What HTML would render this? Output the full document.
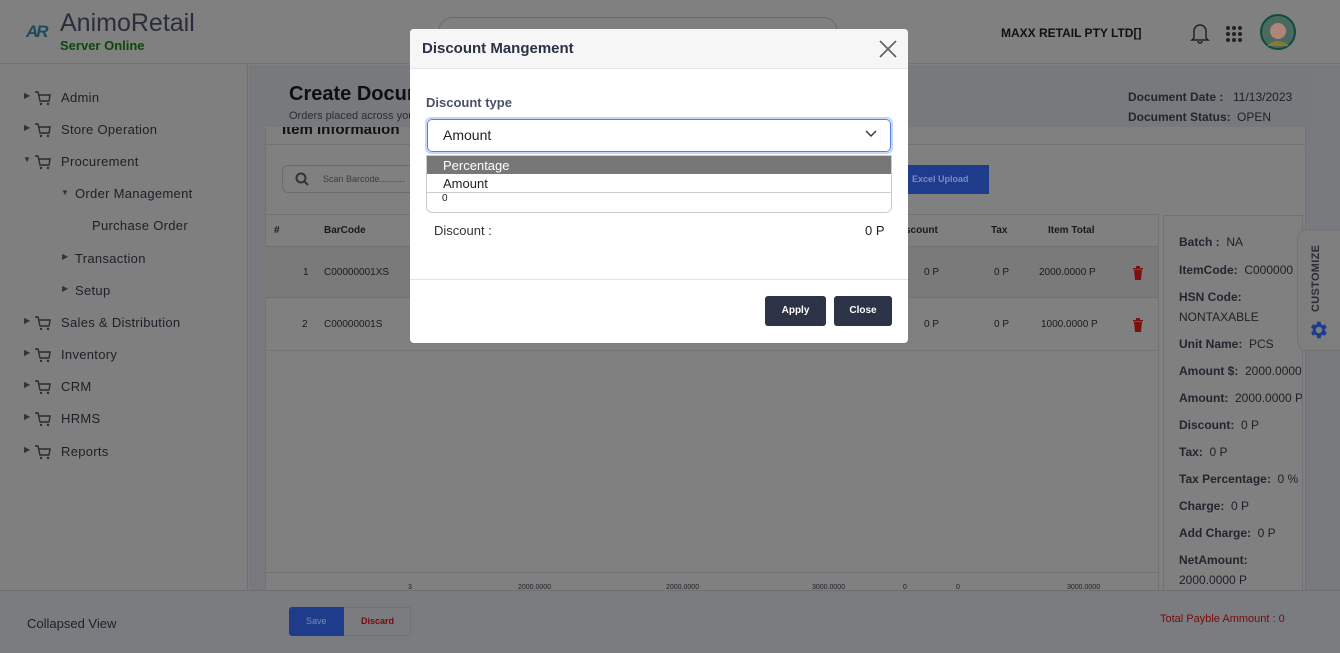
<!DOCTYPE html>
<html><head><meta charset="utf-8">
<style>
*{box-sizing:border-box;margin:0;padding:0}
body{width:1340px;height:653px;overflow:hidden;background:#7f7f7f;font-family:"Liberation Sans",sans-serif;color:#1c1e26;position:relative}
.a{position:absolute}
.hdr{left:0;top:0;width:1340px;height:64px;background:#808080;border-bottom:1px solid #747474}
.side{left:0;top:65px;width:248px;height:525px;background:#7f7f7f;border-right:1px solid #6e6e6e}
.menu{font-size:13px;color:#1e2028;letter-spacing:.3px}
.tri{font-size:8px;color:#333}
.cont{left:249px;top:65px;width:1091px;height:525px;background:#797a7e}
.foot{left:0;top:590px;width:1340px;height:63px;background:#7b7c80;border-top:1px solid #6e6e70}
.card{background:#808080;border:1px solid #727272}
.th{font-size:10px;font-weight:bold;color:#1a1a1a}
.td{font-size:10px;color:#1a1a1a}
.lbl{font-size:12px;color:#1e2028;white-space:nowrap}
.lbl b{color:#23262f}
</style></head><body>
<div class="a hdr"></div>
<div class="a" style="left:26px;top:22px;font-weight:bold;font-style:italic;font-size:17px;color:#1f4a5c;letter-spacing:-2px">AR</div>
<div class="a" style="left:60px;top:9px;font-size:25px;color:#2b2e3a">AnimoRetail</div>
<div class="a" style="left:60px;top:38px;font-size:13px;font-weight:bold;color:#0a4a08">Server Online</div>
<div class="a" style="left:438px;top:17px;width:400px;height:30px;border:1px solid #6a6a6a;border-radius:15px"></div>
<div class="a" style="left:1001px;top:26px;font-size:12px;font-weight:bold;color:#111">MAXX RETAIL PTY LTD[]</div>
<svg class="a" style="left:1190px;top:22px" width="20" height="22" viewBox="0 0 20 22"><path d="M4 16V9a6 6 0 0 1 12 0v7l2 2H2z M8 19a2 2 0 0 0 4 0" fill="none" stroke="#222" stroke-width="1.5"/></svg>
<svg class="a" style="left:1225px;top:25px" width="18" height="18"><g fill="#222"><circle cx="3" cy="3" r="2"/><circle cx="9" cy="3" r="2"/><circle cx="15" cy="3" r="2"/><circle cx="3" cy="9" r="2"/><circle cx="9" cy="9" r="2"/><circle cx="15" cy="9" r="2"/><circle cx="3" cy="15" r="2"/><circle cx="9" cy="15" r="2"/><circle cx="15" cy="15" r="2"/></g></svg>
<svg class="a" style="left:1258px;top:12px" width="40" height="40"><circle cx="20" cy="20" r="17" fill="#4a6a60" stroke="#0e4a3e" stroke-width="2"/><circle cx="20" cy="19" r="8" fill="#b08478"/><path d="M9 34q11-10 22 0" fill="#8a7a30"/></svg>

<div class="a side"></div>
<div class="a menu" style="left:0;top:0;width:248px">
<div class="a tri" style="left:24px;top:91px">▶</div><div class="a" style="left:61px;top:90px">Admin</div>
<div class="a tri" style="left:24px;top:123px">▶</div><div class="a" style="left:61px;top:122px">Store Operation</div>
<div class="a tri" style="left:23px;top:155px">▼</div><div class="a" style="left:61px;top:154px">Procurement</div>
<div class="a tri" style="left:61px;top:188px">▼</div><div class="a" style="left:75px;top:186px">Order Management</div>
<div class="a" style="left:92px;top:218px">Purchase Order</div>
<div class="a tri" style="left:62px;top:252px">▶</div><div class="a" style="left:75px;top:251px">Transaction</div>
<div class="a tri" style="left:62px;top:284px">▶</div><div class="a" style="left:75px;top:283px">Setup</div>
<div class="a tri" style="left:24px;top:316px">▶</div><div class="a" style="left:61px;top:315px">Sales &amp; Distribution</div>
<div class="a tri" style="left:24px;top:348px">▶</div><div class="a" style="left:61px;top:347px">Inventory</div>
<div class="a tri" style="left:24px;top:380px">▶</div><div class="a" style="left:61px;top:379px">CRM</div>
<div class="a tri" style="left:24px;top:412px">▶</div><div class="a" style="left:61px;top:411px">HRMS</div>
<div class="a tri" style="left:24px;top:445px">▶</div><div class="a" style="left:61px;top:444px">Reports</div>
</div>
<svg class="a" style="left:34px;top:90px" width="18" height="380"><g fill="none" stroke="#2a2c34" stroke-width="1.4">
<path d="M1 2h3l2 9h9l1-6H5"/><path d="M1 34h3l2 9h9l1-6H5"/><path d="M1 66h3l2 9h9l1-6H5"/><path d="M1 227h3l2 9h9l1-6H5"/><path d="M1 259h3l2 9h9l1-6H5"/><path d="M1 291h3l2 9h9l1-6H5"/><path d="M1 323h3l2 9h9l1-6H5"/><path d="M1 356h3l2 9h9l1-6H5"/></g>
<g fill="#2a2c34"><circle cx="7" cy="14" r="1.2"/><circle cx="14" cy="14" r="1.2"/><circle cx="7" cy="46" r="1.2"/><circle cx="14" cy="46" r="1.2"/><circle cx="7" cy="78" r="1.2"/><circle cx="14" cy="78" r="1.2"/><circle cx="7" cy="239" r="1.2"/><circle cx="14" cy="239" r="1.2"/><circle cx="7" cy="271" r="1.2"/><circle cx="14" cy="271" r="1.2"/><circle cx="7" cy="303" r="1.2"/><circle cx="14" cy="303" r="1.2"/><circle cx="7" cy="335" r="1.2"/><circle cx="14" cy="335" r="1.2"/><circle cx="7" cy="368" r="1.2"/><circle cx="14" cy="368" r="1.2"/></g></svg>

<div class="a cont"></div>
<div class="a card" style="left:265px;top:120px;width:1041px;height:472px"></div>
<div class="a" style="left:265px;top:144px;width:1041px;height:1px;background:#727272"></div>
<div class="a" style="left:282px;top:121px;font-size:15px;font-weight:bold;color:#111">Item Information</div>
<div class="a" style="left:249px;top:65px;width:1065px;height:62px;background:#77797d"></div>
<div class="a" style="left:289px;top:83px;font-size:20px;font-weight:bold;color:#0e0f14">Create Document</div>
<div class="a" style="left:289px;top:110px;font-size:11px;color:#2a2c34">Orders placed across your store</div>
<div class="a" style="left:1128px;top:90px;font-size:12px;font-weight:bold;color:#23262f">Document Date :</div>
<div class="a" style="left:1233px;top:90px;font-size:12px;color:#1e2028">11/13/2023</div>
<div class="a" style="left:1128px;top:110px;font-size:12px;font-weight:bold;color:#23262f">Document Status:</div>
<div class="a" style="left:1237px;top:110px;font-size:12px;color:#1e2028">OPEN</div>
<div class="a" style="left:282px;top:165px;width:200px;height:28px;border:1px solid #6c6c6c;border-radius:6px"></div>
<svg class="a" style="left:295px;top:172px" width="14" height="14"><circle cx="6" cy="6" r="4.5" fill="none" stroke="#333" stroke-width="2"/><path d="M9 9l4 4" stroke="#333" stroke-width="2"/></svg>
<div class="a" style="left:323px;top:174px;font-size:9px;color:#3a3c44">Scan Barcode..........</div>
<div class="a" style="left:897px;top:165px;width:92px;height:29px;background:#1f3c8c"></div>
<div class="a" style="left:912px;top:174px;font-size:9px;font-weight:bold;color:#7b8cbc">Excel Upload</div>
<div class="a" style="left:265px;top:214px;width:893px;height:1px;background:#727272"></div>
<div class="a" style="left:265px;top:246px;width:893px;height:52px;background:#7a7a7a;border-top:1px solid #727272;border-bottom:1px solid #727272"></div>
<div class="a" style="left:265px;top:350px;width:893px;height:1px;background:#747474"></div>
<div class="a" style="left:1158px;top:214px;width:1px;height:376px;background:#727272"></div>
<div class="a th" style="left:274px;top:225px">#</div>
<div class="a th" style="left:324px;top:225px">BarCode</div>
<div class="a th" style="left:905px;top:225px">scount</div>
<div class="a th" style="left:991px;top:225px">Tax</div>
<div class="a th" style="left:1048px;top:225px">Item Total</div>
<div class="a td" style="left:303px;top:267px">1</div><div class="a td" style="left:324px;top:267px">C00000001XS</div>
<div class="a td" style="left:924px;top:267px">0 P</div><div class="a td" style="left:994px;top:267px">0 P</div><div class="a td" style="left:1039px;top:267px">2000.0000 P</div>
<div class="a td" style="left:302px;top:319px">2</div><div class="a td" style="left:324px;top:319px">C00000001S</div>
<div class="a td" style="left:924px;top:319px">0 P</div><div class="a td" style="left:994px;top:319px">0 P</div><div class="a td" style="left:1041px;top:319px">1000.0000 P</div>
<svg class="a" style="left:1132px;top:266px" width="12" height="14"><path fill="#7a1010" d="M1 2h10v1.5H1zM4 0h4v2H4zM2 4h8l-1 10H3z"/></svg>
<svg class="a" style="left:1132px;top:318px" width="12" height="14"><path fill="#7a1010" d="M1 2h10v1.5H1zM4 0h4v2H4zM2 4h8l-1 10H3z"/></svg>
<div class="a" style="left:265px;top:572px;width:893px;height:1px;background:#727272"></div>
<div class="a" style="left:408px;top:584px;font-size:7px">3</div>
<div class="a" style="left:518px;top:584px;font-size:7px">2000.0000</div>
<div class="a" style="left:666px;top:584px;font-size:7px">2000.0000</div>
<div class="a" style="left:812px;top:584px;font-size:7px">3000.0000</div>
<div class="a" style="left:903px;top:584px;font-size:7px">0</div>
<div class="a" style="left:956px;top:584px;font-size:7px">0</div>
<div class="a" style="left:1067px;top:584px;font-size:7px">3000.0000</div>
<div class="a card" style="left:1163px;top:215px;width:140px;height:380px;overflow:hidden">
<div class="a lbl" style="left:15px;top:19px"><b>Batch :</b>&nbsp; NA</div>
<div class="a lbl" style="left:15px;top:47px"><b>ItemCode:</b>&nbsp; C000000</div>
<div class="a lbl" style="left:15px;top:74px"><b>HSN Code:</b></div>
<div class="a lbl" style="left:15px;top:94px">NONTAXABLE</div>
<div class="a lbl" style="left:15px;top:121px"><b>Unit Name:</b>&nbsp; PCS</div>
<div class="a lbl" style="left:15px;top:148px"><b>Amount $:</b>&nbsp; 2000.0000 P</div>
<div class="a lbl" style="left:15px;top:175px"><b>Amount:</b>&nbsp; 2000.0000 P</div>
<div class="a lbl" style="left:15px;top:202px"><b>Discount:</b>&nbsp; 0 P</div>
<div class="a lbl" style="left:15px;top:229px"><b>Tax:</b>&nbsp; 0 P</div>
<div class="a lbl" style="left:15px;top:256px"><b>Tax Percentage:</b>&nbsp; 0 %</div>
<div class="a lbl" style="left:15px;top:283px"><b>Charge:</b>&nbsp; 0 P</div>
<div class="a lbl" style="left:15px;top:310px"><b>Add Charge:</b>&nbsp; 0 P</div>
<div class="a lbl" style="left:15px;top:337px"><b>NetAmount:</b></div>
<div class="a lbl" style="left:15px;top:357px">2000.0000 P</div>
</div>
<div class="a" style="left:1297px;top:229px;width:45px;height:122px;background:#7e7e7e;border:1px solid #727272;border-radius:10px 0 0 10px"></div>
<div class="a" style="left:1310px;top:312px;transform:rotate(-90deg);transform-origin:left top;font-size:11px;font-weight:bold;color:#2a2c38;letter-spacing:.3px">CUSTOMIZE</div>
<svg class="a" style="left:1307px;top:319px" width="22" height="22" viewBox="0 0 24 24"><path fill="#1e3c8c" d="M19.4 13a7.5 7.5 0 0 0 0-2l2.1-1.6-2-3.5-2.5 1a7 7 0 0 0-1.7-1L15 3h-4l-.4 2.7a7 7 0 0 0-1.7 1l-2.5-1-2 3.5L6.5 11a7.5 7.5 0 0 0 0 2l-2.1 1.6 2 3.5 2.5-1a7 7 0 0 0 1.7 1L11 21h4l.4-2.7a7 7 0 0 0 1.7-1l2.5 1 2-3.5zM13 15.5a3.5 3.5 0 1 1 0-7 3.5 3.5 0 0 1 0 7z"/></svg>

<div class="a foot"></div>
<div class="a" style="left:27px;top:616px;font-size:13px;color:#1e2028">Collapsed View</div>
<div class="a" style="left:289px;top:607px;width:55px;height:29px;background:#1f3c8c;border-radius:3px 0 0 3px"></div>
<div class="a" style="left:306px;top:616px;font-size:9px;color:#7b8cbc">Save</div>
<div class="a" style="left:344px;top:607px;width:67px;height:29px;border:1px solid #727272;border-left:none"></div>
<div class="a" style="left:361px;top:616px;font-size:9px;font-weight:bold;color:#7a0a0a">Discard</div>
<div class="a" style="left:1160px;top:613px;font-size:11px;color:#7a0a0a">Total Payble Ammount : 0</div>

<div class="a" style="left:410px;top:29px;width:498px;height:314px;background:#fff;border-radius:4px;overflow:hidden">
 <div class="a" style="left:0;top:0;width:498px;height:40px;background:#f6f6f6;border-bottom:1px solid #e6e6e6"></div>
 <div class="a" style="left:12px;top:11px;font-size:15px;font-weight:bold;color:#2c3145">Discount Mangement</div>
 <svg class="a" style="left:469px;top:11px" width="18" height="18"><path d="M1 1l16 16M17 1L1 17" stroke="#666" stroke-width="1.8"/></svg>
 <div class="a" style="left:16px;top:66px;font-size:13px;font-weight:bold;color:#4a5068">Discount type</div>
 <div class="a" style="left:15px;top:88px;width:468px;height:37px;border:2px solid #c9d6fb;border-radius:6px"></div>
 <div class="a" style="left:17px;top:90px;width:464px;height:33px;border:1px solid #5a80e8;border-radius:5px"></div>
 <div class="a" style="left:33px;top:98px;font-size:14px;color:#222">Amount</div>
 <svg class="a" style="left:455px;top:101px" width="12" height="8"><path d="M1 1l5 5 5-5" fill="none" stroke="#333" stroke-width="1.4"/></svg>
 <div class="a" style="left:16px;top:126px;width:466px;height:58px;border:1px solid #ccc;border-radius:0 0 6px 6px"></div>
 <div class="a" style="left:17px;top:127px;width:464px;height:18px;background:#777"></div>
 <div class="a" style="left:33px;top:129px;font-size:13px;color:#fff">Percentage</div>
 <div class="a" style="left:33px;top:147px;font-size:13px;color:#222">Amount</div>
 <div class="a" style="left:17px;top:163px;width:464px;height:1px;background:#ccc"></div>
 <div class="a" style="left:32px;top:164px;font-size:10px;color:#222">0</div>
 <div class="a" style="left:24px;top:194px;font-size:13px;color:#333">Discount :</div>
 <div class="a" style="left:455px;top:194px;font-size:13px;color:#222">0 P</div>
 <div class="a" style="left:0;top:250px;width:498px;height:1px;background:#e4e4e4"></div>
 <div class="a" style="left:355px;top:267px;width:61px;height:30px;background:#2d3346;border-radius:3px;color:#fff;font-size:10px;font-weight:bold;text-align:center;line-height:30px">Apply</div>
 <div class="a" style="left:424px;top:267px;width:58px;height:30px;background:#2d3346;border-radius:3px;color:#fff;font-size:10px;font-weight:bold;text-align:center;line-height:30px">Close</div>
</div>
</body></html>
